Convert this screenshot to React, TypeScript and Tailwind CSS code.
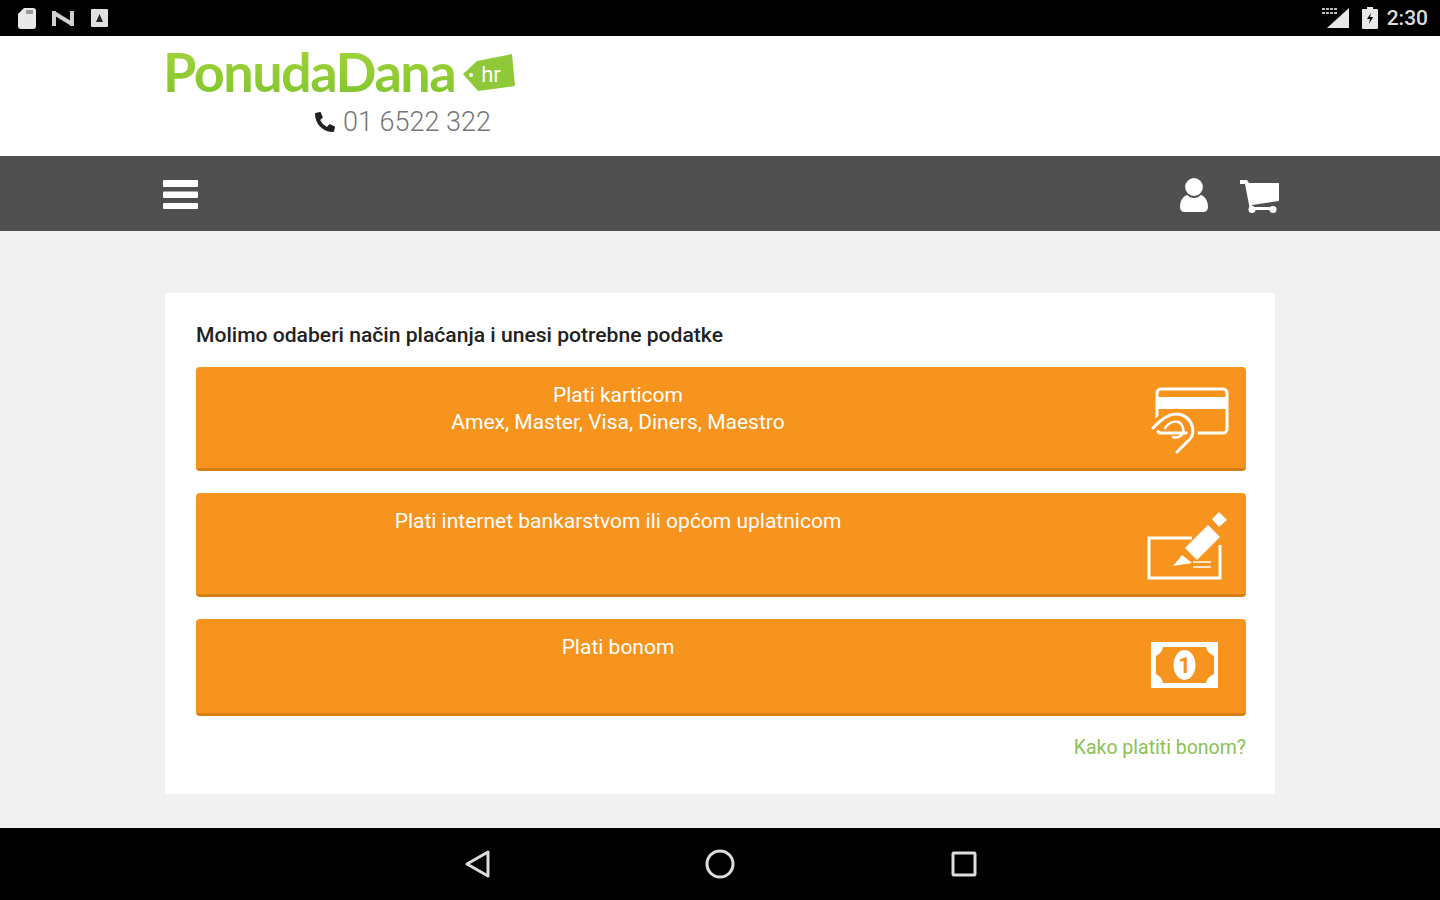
import React from 'react'
import { FaPhoneAlt } from 'react-icons/fa'

function CardIcon() {
  return (
    <svg width="80" height="70" viewBox="0 0 80 70" fill="none" stroke="#fff" strokeLinecap="round" className="mt-[5px]">
      <rect x="7" y="4" width="70" height="44" rx="4" strokeWidth="3" />
      <rect x="7" y="12" width="70" height="12" fill="#fff" stroke="none" />
      <path d="M3 43C12 33 22 26 32 30C44 35 46 50 38 56L27 67" stroke="#f7941d" strokeWidth="10" />
      <path d="M3 43C12 33 22 26 32 30C44 35 46 50 38 56L27 67" strokeWidth="3" />
      <path d="M15 43C20 36 30 33 33 43C35 50 28 54 23 52" strokeWidth="2.5" />
    </svg>
  )
}

function CheckIcon() {
  return (
    <svg width="90" height="75" viewBox="0 0 90 75" fill="none" className="mt-[8px]">
      <path d="M52 28H9V68H80V35" stroke="#fff" strokeWidth="3" />
      <path d="M45 38L68 15L80 27L57 50Z" fill="#fff" />
      <path d="M42 45L52 53L33 56Z" fill="#fff" />
      <path d="M72 9L79 2L87 10L79 17Z" fill="#fff" />
      <path d="M53 52H71M53 57H71" stroke="#fff" strokeWidth="2" opacity="0.75" />
    </svg>
  )
}

function MoneyIcon() {
  return (
    <svg width="67" height="46" viewBox="0 0 67 46" className="mr-[12px] mb-[2px]">
      <rect width="67" height="46" fill="#fff" />
      <path d="M12 5H55Q56 11 63 14V32Q56 35 55 41H12Q11 35 5 32V14Q11 11 12 5Z" fill="#f7941d" />
      <ellipse cx="33.5" cy="23" rx="11" ry="15" fill="#fff" />
      <text x="33.5" y="31" textAnchor="middle" fontSize="22" fontWeight="700" fontFamily="Roboto, sans-serif" fill="#f7941d">
        1
      </text>
    </svg>
  )
}

function StatusBar() {
  return (
    <div className="h-[36px] bg-black flex items-center justify-between pl-[18px] pr-[12px]">
      <div className="flex items-center gap-[16px]">
        <svg width="18" height="21" viewBox="0 0 18 21">
          <path d="M6 0H15Q18 0 18 3V18Q18 21 15 21H3Q0 21 0 18V6Z" fill="#e8e8e8" />
          <path d="M8 2H15V6H8Z" fill="#9a9a9a" />
        </svg>
        <svg width="23" height="17" viewBox="0 0 23 17">
          <path d="M2 1V16M2 3L20 14M20 1V16" stroke="#d0d0d0" strokeWidth="4" fill="none" />
        </svg>
        <svg width="17" height="18" viewBox="0 0 17 18">
          <rect width="17" height="18" rx="1" fill="#e0e0e0" />
          <path d="M8.5 5L12 13H5Z" fill="#222" />
        </svg>
      </div>
      <div className="flex items-center">
        <svg width="28" height="24" viewBox="0 0 28 24" className="mr-[12px]">
          <path d="M5 22L27 2V22Z" fill="#e8e8e8" />
          <path d="M0 3H16M0 7H16" stroke="#bbb" strokeWidth="2" strokeDasharray="3 1" />
        </svg>
        <svg width="16" height="22" viewBox="0 0 16 22" className="mr-[9px]">
          <path d="M5 0H11V2H15Q16 2 16 3V21Q16 22 15 22H1Q0 22 0 21V3Q0 2 1 2H5Z" fill="#e8e8e8" />
          <path d="M9 6L5 12H8L7 17L11 10H8Z" fill="#000" />
        </svg>
        <span className="font-['Roboto',sans-serif] font-medium text-[21px] text-[#dcdcdc] leading-none">2:30</span>
      </div>
    </div>
  )
}

function Header() {
  return (
    <div className="h-[120px] bg-white pl-[163px] pt-[8px]">
      <div className="flex items-center">
        <span className="font-['Lato',sans-serif] font-bold text-[54px] leading-[56px] tracking-[-1.5px] bg-linear-to-b from-[#a6d33c] to-[#7fc52c] bg-clip-text text-transparent">
          PonudaDana
        </span>
        <svg width="54" height="42" viewBox="0 0 54 42" className="ml-[7px] mt-[2px]">
          <path d="M1 22L15 9L50 2L53 34L16 39Z" fill="#8fc93a" />
          <circle cx="9" cy="23" r="2" fill="#fff" />
          <text x="29" y="30" textAnchor="middle" fontSize="22" fontFamily="Roboto, sans-serif" fill="#fff">
            hr
          </text>
        </svg>
      </div>
      <div className="flex items-center ml-[152px] mt-[4px]">
        <FaPhoneAlt className="text-[#222] text-[20px] mr-[8px]" />
        <span className="font-['Roboto',sans-serif] font-light text-[27px] leading-[36px] text-[#777]">01 6522 322</span>
      </div>
    </div>
  )
}

function NavBar() {
  return (
    <div className="h-[75px] bg-[#505050] flex items-center justify-between pl-[163px] pr-[161px] text-white">
      <svg width="35" height="29" viewBox="0 0 35 29" fill="#fff" className="mt-[2px]">
        <rect width="35" height="7" rx="1" />
        <rect y="11.5" width="35" height="6.5" rx="1" />
        <rect y="23" width="35" height="6" rx="1" />
      </svg>
      <div className="flex items-center gap-[32px] mt-[2px]">
        <svg width="28" height="34" viewBox="0 0 30 34" fill="#fff" preserveAspectRatio="none">
          <ellipse cx="15" cy="9" rx="9.5" ry="9" />
          <path d="M8 17C11 21 19 21 22 17C27 18 30 23 30 29C30 32 28 34 25 34H5C2 34 0 32 0 29C0 23 3 18 8 17Z" />
        </svg>
        <svg width="39" height="33" viewBox="0 0 39 33" fill="#fff" className="mt-[3px]">
          <path d="M0 0H7L9 3H39V21L12 25L13 27H36V30H10L5 4H0Z" />
          <circle cx="12" cy="29.5" r="3.5" />
          <circle cx="33" cy="29.5" r="3.5" />
        </svg>
      </div>
    </div>
  )
}

function PayButton({ height, icon, children }: { height: string; icon: React.ReactNode; children: React.ReactNode }) {
  return (
    <div className={`${height} flex bg-[#f7941d] border-b-[3px] border-[#d67d14] rounded-[4px] text-white`}>
      <div className="w-[844px] pt-[15px] text-center text-[21px] leading-[27px]">{children}</div>
      <div className="flex-1 flex items-center justify-end pr-[16px]">{icon}</div>
    </div>
  )
}

const App: React.FC = () => {
  return (
    <div className="w-[1440px] h-[900px] flex flex-col overflow-hidden font-['Roboto',sans-serif] bg-[#f1f1f1]">
      <StatusBar />
      <Header />
      <NavBar />
      <div className="flex-1 pt-[62px] pl-[165px]">
        <div className="w-[1110px] h-[501px] bg-white px-[31px] pt-[28px]">
          <h1 className="text-[21.1px] leading-[28px] font-medium text-[#222] mb-[18px]">
            Molimo odaberi način plaćanja i unesi potrebne podatke
          </h1>
          <div className="flex flex-col gap-[22px] w-[1050px]">
            <PayButton height="h-[104px]" icon={<CardIcon />}>
              Plati karticom
              <br />
              Amex, Master, Visa, Diners, Maestro
            </PayButton>
            <PayButton height="h-[104px]" icon={<CheckIcon />}>
              Plati internet bankarstvom ili općom uplatnicom
            </PayButton>
            <PayButton height="h-[97px]" icon={<MoneyIcon />}>
              Plati bonom
            </PayButton>
          </div>
          <div className="w-[1050px] text-right text-[19.5px] leading-[24px] text-[#8cc152] mt-[20px]">Kako platiti bonom?</div>
        </div>
      </div>
      <div className="h-[72px] bg-black flex items-center justify-center gap-[216px]">
        <svg width="26" height="28" viewBox="0 0 26 28" fill="none" stroke="#ddd" strokeWidth="3" strokeLinejoin="round" className="ml-[2px] -mr-[2px]">
          <path d="M23 2V26L2 14Z" />
        </svg>
        <svg width="30" height="30" viewBox="0 0 30 30" fill="none" stroke="#ddd" strokeWidth="3">
          <circle cx="15" cy="15" r="13" />
        </svg>
        <svg width="26" height="26" viewBox="0 0 26 26" fill="none" stroke="#ddd" strokeWidth="3" strokeLinejoin="round">
          <rect x="2" y="2" width="22" height="22" rx="1" />
        </svg>
      </div>
    </div>
  )
}

export default App
